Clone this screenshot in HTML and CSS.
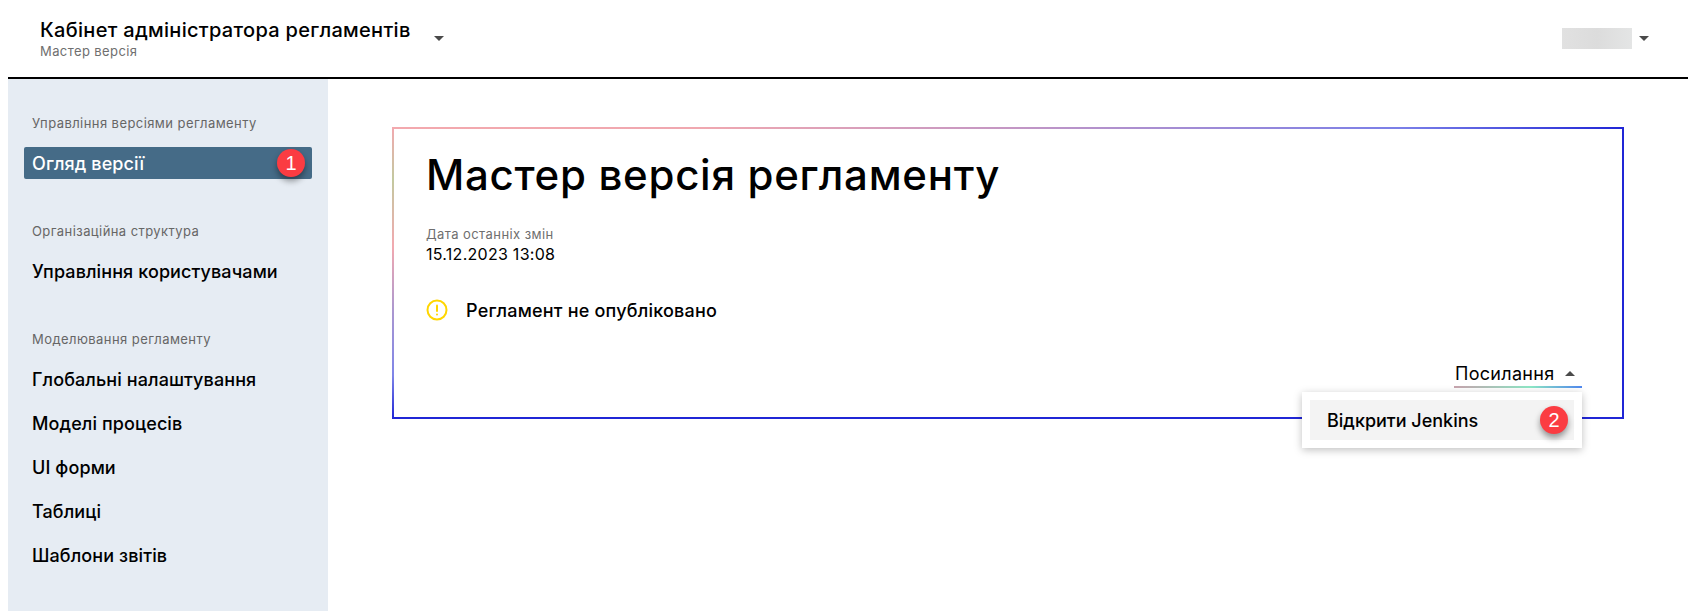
FILE: index.html
```
<!DOCTYPE html>
<html lang="uk">
<head>
<meta charset="utf-8">
<title>Кабінет адміністратора регламентів</title>
<link rel="stylesheet" href="styles.css">
</head>
<body>
<header class="topbar">
  <div class="brand">
    <div class="brand-text">
      <div class="brand-title">Кабінет адміністратора регламентів</div>
      <div class="brand-sub">Мастер версія</div>
    </div>
    <span class="caret caret-down brand-caret"></span>
  </div>
  <div class="user">
    <span class="user-blur"></span>
    <span class="caret caret-down"></span>
  </div>
</header>
<div class="layout">
  <nav class="sidebar">
    <div class="nav-group">
      <div class="nav-label">Управління версіями регламенту</div>
      <a class="nav-item active">Огляд версії<span class="badge">1</span></a>
    </div>
    <div class="nav-group">
      <div class="nav-label">Організаційна структура</div>
      <a class="nav-item">Управління користувачами</a>
    </div>
    <div class="nav-group">
      <div class="nav-label">Моделювання регламенту</div>
      <a class="nav-item">Глобальні налаштування</a>
      <a class="nav-item">Моделі процесів</a>
      <a class="nav-item">UI форми</a>
      <a class="nav-item">Таблиці</a>
      <a class="nav-item">Шаблони звітів</a>
    </div>
  </nav>
  <main class="content">
    <section class="card">
      <h1 class="card-title">Мастер версія регламенту</h1>
      <div class="meta-label">Дата останніх змін</div>
      <div class="meta-value">15.12.2023 13:08</div>
      <div class="status">
        <svg class="status-icon" width="22" height="22" viewBox="0 0 22 22" aria-hidden="true">
          <circle cx="11" cy="11" r="9.5" fill="none" stroke="#FFD600" stroke-width="2"/>
          <rect x="10" y="5.5" width="2" height="7.5" rx="1" fill="#FFD600"/>
          <rect x="10" y="14.5" width="2" height="2" rx="1" fill="#FFD600"/>
        </svg>
        <span>Регламент не опубліковано</span>
      </div>
      <div class="links">
        <div class="links-toggle">Посилання<span class="caret caret-up"></span></div>
        <div class="menu">
          <div class="menu-item">Відкрити Jenkins<span class="badge badge-menu">2</span></div>
        </div>
      </div>
    </section>
  </main>
</div>
</body>
</html>
```
FILE: styles.css
```
* { box-sizing: border-box; }
html, body { height: 100%; }
body {
  margin: 0;
  padding: 0 8px;
  height: 611px;
  overflow: hidden;
  background: #fff;
  color: #000;
  font-family: Inter, "Liberation Sans", sans-serif;
  display: flex;
  flex-direction: column;
}
.topbar {
  height: 79px;
  flex: none;
  border-bottom: 2px solid #000;
  display: flex;
  justify-content: space-between;
  align-items: flex-start;
  padding: 19px 39px 0 32px;
}
.brand { display: flex; align-items: flex-start; }
.brand-title { font-size: 20px; line-height: 23px; font-weight: 500; letter-spacing: .3px; }
.brand-sub { font-size: 13px; line-height: 16px; margin-top: 1px; color: #6f6f6f; letter-spacing: .4px; }
.brand-caret { margin: 17px 0 0 23px; }
.user { display: flex; align-items: center; gap: 7px; margin-top: 9px; }
.user-blur {
  width: 70px; height: 21px;
  background: linear-gradient(90deg, #e1e1e1, #dcdcdc 50%, #e4e5e5);
}
.caret { display: inline-block; width: 0; height: 0; border-left: 5px solid transparent; border-right: 5px solid transparent; }
.caret-down { border-top: 5px solid #4a4a4a; }
.caret-up { border-bottom: 5px solid #4a4a4a; margin-left: 10px; }
.layout { flex: 1; display: flex; min-height: 0; }
.sidebar {
  width: 320px;
  flex: none;
  background: #e6ecf3;
  padding: 36px 16px 0;
}
.nav-group { margin-bottom: 44px; }
.nav-label { font-size: 13px; line-height: 16px; color: #666; padding-left: 8px; margin-bottom: 16px; letter-spacing: .43px; }
.nav-item {
  display: flex;
  align-items: center;
  justify-content: space-between;
  height: 32px;
  padding: 0 7px 0 8px;
  margin-bottom: 12px;
  font-size: 18px;
  font-weight: 500;
  letter-spacing: .1px;
  border-radius: 2px;
}
.nav-item:last-child { margin-bottom: 0; }
.nav-item.active { background: #456b87; color: #fff; }
.badge {
  width: 28px; height: 28px;
  border-radius: 50%;
  background: #fb3c42;
  color: #fff;
  font-size: 20px;
  font-weight: 400;
  display: flex; align-items: center; justify-content: center;
  box-shadow: 0 4px 6px rgba(0,0,0,.4);
  font-family: "Liberation Sans", sans-serif;
}
.content { flex: 1; padding: 48px 0 0 64px; min-width: 0; }
.card {
  position: relative;
  width: 1232px;
  height: 292px;
  padding: 22px 32px 0 34px;
  background:
    linear-gradient(90deg, #f3a9ae 0, #f0a8b0 25%, #c497c4 50%, #7a7fe8 82%, #2026d6 100%) top / 100% 2px no-repeat,
    linear-gradient(180deg, #f2a9b0 0, #c3c99f 18%, #f2a9b0 41%, #ab97d0 63%, #7f85e8 85%, #2026d6 100%) left / 2px 100% no-repeat,
    linear-gradient(#2026d6, #2026d6) right / 2px 100% no-repeat,
    linear-gradient(#2026d6, #2026d6) bottom / 100% 2px no-repeat;
}
.card-title { margin: 0 0 26px; font-size: 42px; line-height: 52px; font-weight: 500; letter-spacing: .7px; }
.meta-label { font-size: 13px; line-height: 15px; color: #6f6f6f; letter-spacing: .42px; }
.meta-value { font-size: 16px; line-height: 22px; margin-top: 1px; letter-spacing: .27px; }
.status { display: flex; align-items: center; gap: 18px; margin-top: 34px; font-size: 18px; font-weight: 500; letter-spacing: .2px; }
.links { position: absolute; right: 42px; top: 232px; }
.links-toggle {
  width: 128px;
  height: 29px;
  padding: 2px 0 0 1px;
  display: flex;
  align-items: center;
  font-size: 18px;
  letter-spacing: .3px;
  border-bottom: 2px solid;
  border-image: linear-gradient(90deg, #c9a3ae, #8de8c6 60%, #4f86f0) 1;
}
.menu {
  position: absolute;
  right: 0; top: 33px;
  width: 280px;
  background: #fff;
  padding: 8px;
  box-shadow: 0 2px 8px rgba(0,0,0,.25);
}
.menu-item {
  height: 40px;
  background: #f3f3f3;
  padding: 0 6px 0 17px;
  display: flex; align-items: center; justify-content: space-between;
  font-size: 18px;
  font-weight: 500;
}
```
